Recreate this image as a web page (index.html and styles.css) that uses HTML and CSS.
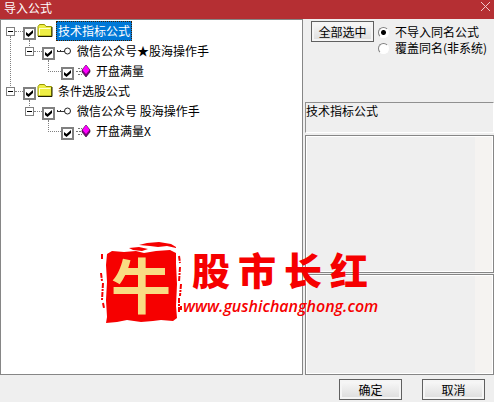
FILE: index.html
```html
<!DOCTYPE html>
<html lang="zh-CN">
<head>
    <meta charset="UTF-8">
    <meta name="viewport" content="width=device-width, initial-scale=1.0">
    <title>导入公式</title>
    <link rel="stylesheet" href="styles.css">
</head>
<body>
    <!-- shared tree icons -->
    <svg class="sprite" aria-hidden="true">
        <symbol id="folder" viewBox="0 0 16 14">
            <path d="M1 12V2.500L2.500 .5h5L9 2.500h5.500V12z" fill="#eeee44" stroke="#999900"/>
            <path d="M2 4.500h11.500M2.500 4v7" stroke="#ffffcc" fill="none"/>
            <path d="M1 12.500h14V3" stroke="#202000" fill="none"/>
        </symbol>
        <symbol id="key" viewBox="0 0 16 14">
            <path d="M1 7.500h8M1.500 6v2M4.500 6v2" stroke="#333" fill="none"/>
            <circle cx="11.500" cy="7" r="3" fill="#fff" stroke="#222"/>
        </symbol>
        <symbol id="gem" viewBox="0 0 16 14">
            <path d="M3 4.500h4M1 7.500h5M3 10.500h4" stroke="#777" stroke-dasharray="2 1" fill="none"/>
            <path d="M11 1l4 5v2l-4 5-4-5V6z" fill="#800080" stroke="#200020" stroke-width=".6"/>
            <path d="M11 1l3.500 5L11 10 7.500 6z" fill="#ff00ff"/>
        </symbol>
    </svg>

    <div class="dialog">
        <header class="titlebar">
            <h1>导入公式</h1>
            <button class="close" aria-label="关闭">
                <svg viewBox="0 0 9 9"><path d="M0 0l9 9M9 0L0 9"/></svg>
            </button>
        </header>

        <main class="content">
            <section class="tree-panel">
                <ul class="tree">
                    <li>
                        <div class="row">
                            <button class="toggle" aria-label="折叠"></button><span class="line"></span>
                            <input type="checkbox" id="f1" checked>
                            <svg class="icon"><use href="#folder"/></svg>
                            <label class="selected" for="f1">技术指标公式</label>
                        </div>
                        <ul>
                            <li>
                                <div class="row">
                                    <button class="toggle" aria-label="折叠"></button><span class="line"></span>
                                    <input type="checkbox" id="f2" checked>
                                    <svg class="icon"><use href="#key"/></svg>
                                    <label for="f2">微信公众号★股海操作手</label>
                                </div>
                                <ul>
                                    <li>
                                        <div class="row">
                                            <span class="line leaf"></span>
                                            <input type="checkbox" id="f3" checked>
                                            <svg class="icon"><use href="#gem"/></svg>
                                            <label for="f3">开盘满量</label>
                                        </div>
                                    </li>
                                </ul>
                            </li>
                        </ul>
                    </li>
                    <li>
                        <div class="row">
                            <button class="toggle" aria-label="折叠"></button><span class="line"></span>
                            <input type="checkbox" id="f4" checked>
                            <svg class="icon"><use href="#folder"/></svg>
                            <label for="f4">条件选股公式</label>
                        </div>
                        <ul>
                            <li>
                                <div class="row">
                                    <button class="toggle" aria-label="折叠"></button><span class="line"></span>
                                    <input type="checkbox" id="f5" checked>
                                    <svg class="icon"><use href="#key"/></svg>
                                    <label for="f5">微信公众号 股海操作手</label>
                                </div>
                                <ul>
                                    <li>
                                        <div class="row">
                                            <span class="line leaf"></span>
                                            <input type="checkbox" id="f6" checked>
                                            <svg class="icon"><use href="#gem"/></svg>
                                            <label for="f6">开盘满量X</label>
                                        </div>
                                    </li>
                                </ul>
                            </li>
                        </ul>
                    </li>
                </ul>
            </section>

            <aside class="side">
                <div class="options">
                    <button class="btn">全部选中</button>
                    <div class="radios">
                        <label><input type="radio" name="mode" checked>不导入同名公式</label>
                        <label><input type="radio" name="mode">覆盖同名(非系统)</label>
                    </div>
                </div>
                <div class="caption">技术指标公式</div>
                <div class="pane detail"></div>
                <div class="pane notes"></div>
            </aside>
        </main>

        <footer class="actions">
            <button class="btn">确定</button>
            <button class="btn">取消</button>
        </footer>

        <!-- watermark over the panels -->
        <div class="watermark">
            <div class="seal">
                <svg viewBox="0 0 82 82" aria-hidden="true">
                    <path d="M7 12l5-3 12 1 12-1 8 2 12-2 14-1 6 3v11l1 20-1 22 1 12-4 3-12-1-8 1-12 1-14-2-10 2-11 1 1-6-1-17 1-18-1-17z" fill="#f60000"/>
                    <path d="M39 3l8-2 12-1 12 2 5 3v1l-9-2-9 1-8-1zM29 6l10-1 9 2-6 2-9-1z" fill="#f60000"/>
                    <path d="M79 14l1 7M80 25l-1 15M81 42l-1 12M79 56v14M81 64v4M2 12v5M1 31l1 8M3 41l-1 17M3 61l1 5" fill="none" stroke="#f60000" stroke-width="2" stroke-dasharray="5 1 2 1"/>
                </svg>
                <span>牛</span>
            </div>
            <div class="brand">
                <div class="name"><span>股</span><span>市</span><span>长</span><span>红</span></div>
                <div class="url">www.gushichanghong.com</div>
            </div>
        </div>
    </div>
</body>
</html>
```

FILE: styles.css
```css
* {
    margin: 0;
    padding: 0;
    box-sizing: border-box;
}

body {
    font-family: "Noto Sans CJK SC", sans-serif;
    font-size: 12px;
    line-height: 16px;
    background: #efefef;
    color: #000;
}

button {
    font: inherit;
    color: inherit;
}

.sprite {
    position: absolute;
    width: 0;
    height: 0;
}

.dialog {
    position: relative;
    display: flex;
    flex-direction: column;
    min-height: 100vh;
}

.titlebar {
    display: flex;
    justify-content: space-between;
    align-items: flex-start;
    height: 19px;
    padding: 0 4px;
    background: #b52f33;
    color: #fff;
}

.titlebar h1 {
    font-size: 12px;
    font-weight: normal;
}

.close {
    width: 9px;
    height: 9px;
    margin-top: 2px;
    border: none;
    background: none;
}

.close svg {
    display: block;
    width: 9px;
    height: 9px;
    stroke: #f0caca;
}

.content {
    flex: 1;
    display: grid;
    grid-template-columns: 303fr 189fr;
    gap: 2px;
}

.tree-panel {
    border: 1px solid #868686;
    background: #fff;
    padding: 1px 5px;
}

/* tree */
.tree,
.tree ul {
    list-style: none;
}

.tree ul {
    padding-left: 19px;
}

.tree li {
    position: relative;
}

.tree > li:not(:last-child)::before,
.tree ul > li::before {
    content: "";
    position: absolute;
    left: 4px;
    border-left: 1px dotted #808080;
}

.tree > li:not(:last-child)::before {
    top: 15px;
    bottom: -5px;
}

.tree ul > li::before {
    top: -1px;
    height: 12px;
}

.row {
    display: flex;
    align-items: center;
    height: 20px;
}

.toggle {
    position: relative;
    width: 9px;
    height: 9px;
    border: 1px solid #808080;
    background: linear-gradient(#000, #000) center / 5px 1px no-repeat #fff;
}

.line {
    width: 8px;
    border-top: 1px dotted #808080;
}

.line.leaf {
    width: 13px;
    margin-left: 4px;
}

.row input {
    appearance: none;
    display: grid;
    place-items: center;
    align-self: flex-end;
    width: 13px;
    height: 13px;
    margin-bottom: 1px;
    border: 2px solid #808080;
    background: #fff;
}

.row input:checked::after {
    content: "";
    width: 7px;
    height: 7px;
    background: #000;
    clip-path: polygon(0 30%, 36% 58%, 100% 0, 100% 42%, 36% 100%, 0 72%);
}

.icon {
    width: 16px;
    height: 14px;
    margin: 0 3px 0 1px;
}

.row label {
    padding: 0 2px;
    line-height: 20px;
    white-space: nowrap;
}

.row .selected {
    background: #0078d7;
    color: #fff;
    outline: 1px dotted #402000;
    outline-offset: -1px;
}

/* right column */
.side {
    display: flex;
    flex-direction: column;
}

.options {
    display: flex;
    align-items: flex-start;
    gap: 4px;
    height: 83px;
    padding: 2px 0 0 6px;
}

.btn {
    width: 63px;
    height: 21px;
    flex: none;
    border: 1px solid #606060;
    background: linear-gradient(#fafafa, #dcdcdc);
    box-shadow: inset 0 0 0 2px #f5f5f5;
    line-height: 16px;
}

.radios {
    padding-top: 3px;
}

.radios label {
    display: flex;
    align-items: center;
    white-space: nowrap;
}

.radios input {
    appearance: none;
    width: 11px;
    height: 11px;
    margin-right: 6px;
    border: 1px solid;
    border-color: #808080 #fff #fff #808080;
    border-radius: 50%;
    background: #fff;
}

.radios input:checked {
    background: radial-gradient(circle, #000 2px, #fff 3px);
}

.caption {
    height: 31px;
    border: 1px solid;
    border-color: #909090 #fff #fff #909090;
}

.pane {
    margin-top: 2px;
    border: 1px solid #868686;
    background: linear-gradient(#f5f3f1, #f5f3f1) right / 18px 100% no-repeat;
    box-shadow: inset 0 0 0 1px #fff;
}

.detail {
    flex: 138;
}

.notes {
    flex: 101;
    margin-top: 1px;
}

.actions {
    display: flex;
    justify-content: flex-end;
    gap: 20px;
    height: 27px;
    padding: 4px 9px 0;
}

/* watermark */
.watermark {
    position: absolute;
    left: 100px;
    top: 242px;
    display: flex;
    color: #f60000;
    pointer-events: none;
}

.seal {
    position: relative;
    width: 82px;
    height: 82px;
}

.seal svg {
    display: block;
}

.seal span {
    position: absolute;
    inset: 0;
    font-size: 60px;
    font-weight: 700;
    line-height: 82px;
    text-align: center;
    color: #f9dc83;
}

.name {
    display: flex;
    gap: 8px;
    padding-left: 10px;
    font-size: 38px;
    font-weight: 900;
    line-height: 54px;
}

.url {
    padding-left: 1px;
    font: italic 600 16px/20px "Open Sans", sans-serif;
}
```
